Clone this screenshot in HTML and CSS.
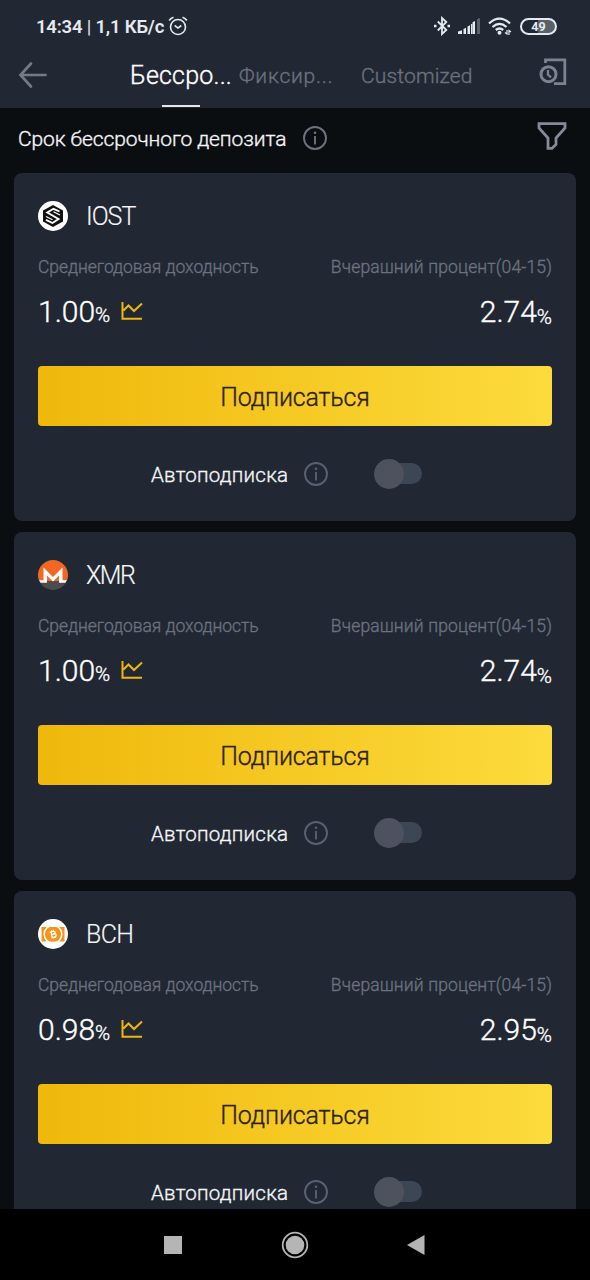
FILE: index.html
```html
<!DOCTYPE html>
<html lang="ru">
<head>
<meta charset="utf-8">
<title>Бессрочный депозит</title>
<link rel="stylesheet" href="styles.css">
</head>
<body>
<svg class="defs" aria-hidden="true">
  <symbol id="info" viewBox="0 0 26 26"><circle cx="13" cy="13" r="11" fill="none" stroke="currentColor" stroke-width="1.9"/><path d="M13 11v8.500" stroke="currentColor" stroke-width="1.900"/><circle cx="13" cy="7.800" r="1.300" fill="currentColor"/></symbol>
  <symbol id="chart" viewBox="0 0 22 20"><path d="M1.500 1v16.800H21M2.500 9.500l5-5 5.500 5.500L21 2.500" fill="none" stroke="currentColor" stroke-width="2"/></symbol>
</svg>
<div class="screen">
  <header class="header">
    <div class="status">
      <span class="clock">14:34 <i>|</i> 1,1 КБ/с</span>
      <svg class="alarm" viewBox="0 0 20 20" width="20" height="20" fill="none" stroke="currentColor" stroke-width="1.600"><circle cx="10" cy="11" r="7.500"/><path d="M6.700 9.500l3.300 2.600 3.300-2.600M1.200 4.500Q2.500 2.200 5.500 1.200M18.800 4.500Q17.500 2.200 14.500 1.200"/></svg>
      <div class="signals">
        <svg viewBox="0 0 16 20" width="16" height="20" fill="none" stroke="currentColor" stroke-width="1.800"><path d="M3.800 5.500l8.500 8.500-4.300 4V2l4.300 4-8.500 8.500"/><path d="M0 10h2.500M13.500 10H16" stroke-width="2.500"/></svg>
        <svg viewBox="0 0 22 16" width="22" height="16" fill="currentColor"><path d="M0 16v-2.500l4-1.200V16zM5.500 16v-5L8 9.800V16zM9.500 16V8.500L12 7.300V16zM13 16V6h1.200V16zM14.500 16V4.200L17 3V16z"/><path d="M19 16V1.200L22 0v16z" opacity=".3"/></svg>
        <svg viewBox="0 0 24 19" width="24" height="19"><g fill="none" stroke="currentColor" stroke-width="2.300"><path d="M1 6.500Q11.500-3.200 22 6.500M4.500 10Q11.500 3.800 18.500 10M7.800 13Q11.500 10 15.200 13"/></g><circle cx="11.500" cy="15.800" r="2" fill="currentColor"/><path d="M19 13v4l-2-1.500M21 18v-4.500l2 1.500" fill="none" stroke="currentColor" stroke-width="1.200"/></svg>
        <span class="battery">49</span>
      </div>
    </div>
    <nav class="tabs">
      <svg class="back" viewBox="0 0 30 28" width="30" height="28" fill="none" stroke="currentColor" stroke-width="2.700" stroke-linecap="round"><path d="M13 2.500L2.500 14 13 25.500M3 14h24.500"/></svg>
      <span class="tab tab-active"><span class="t-title">Бессро...</span></span>
      <span class="tab t-fixed">Фиксир...</span>
      <span class="tab t-custom">Customized</span>
      <svg class="history" viewBox="0 0 28 28" width="28" height="28" fill="none" stroke="currentColor"><path d="M6.500 5V1.800h19.300V25.700H15" stroke-width="2.800"/><circle cx="9.500" cy="16.200" r="7.500" stroke-width="3"/><path d="M9 12v4.800l3 2.500" stroke-width="2.300"/></svg>
    </nav>
  </header>
  <main class="content">
    <div class="section">
      <h1>Срок бессрочного депозита</h1>
      <svg class="info section-info"><use href="#info"/></svg>
      <svg class="filter" viewBox="0 0 30 30" width="30" height="30" fill="none" stroke="currentColor" stroke-width="2.800"><path d="M2 2.600H28V7L19 17v6.500L15 27.300H11V17L2 7z"/></svg>
    </div>
    <article class="card">
      <div class="coin">
        <svg viewBox="0 0 30 30"><circle cx="15" cy="15" r="15" fill="#fff"/><path d="M15 4l10 5.500v11L15 26 5 20.500v-11z" fill="#111"/><path d="M21.500 10.500L15.500 7.800 9.300 11.500 20.500 18 14.500 22 8 18.800" fill="none" stroke="#fff" stroke-width="1.900"/><path d="M8 15.500l6.500 3.300M22 14l-6.500-3.300" fill="none" stroke="#fff" stroke-width="1.100"/></svg>
        <h2 class="n-iost">IOST</h2>
      </div>
      <div class="labels"><span class="l-rate">Среднегодовая доходность</span><span class="l-yday">Вчерашний процент(04-15)</span></div>
      <div class="values"><span class="value">1.00<small>%</small></span><svg class="chart"><use href="#chart"/></svg><span class="value value-right">2.74<small>%</small></span></div>
      <button class="subscribe">Подписаться</button>
      <div class="auto"><span>Автоподписка</span><svg class="info"><use href="#info"/></svg><i class="switch"></i></div>
    </article>
    <article class="card">
      <div class="coin">
        <svg viewBox="0 0 30 30"><circle cx="15" cy="15" r="15" fill="#4c4c4c"/><path d="M1.200 21a15 15 0 1 1 27.600 0z" fill="#f26822"/><path d="M1.200 20.300h4.300V7.500L15 17l9.500-9.500v12.800h4.300l-1.300 2.500H21V15.500l-6 6-6-6v7.300H2.500z" fill="#fff"/></svg>
        <h2 class="n-xmr">XMR</h2>
      </div>
      <div class="labels"><span class="l-rate">Среднегодовая доходность</span><span class="l-yday">Вчерашний процент(04-15)</span></div>
      <div class="values"><span class="value">1.00<small>%</small></span><svg class="chart"><use href="#chart"/></svg><span class="value value-right">2.74<small>%</small></span></div>
      <button class="subscribe">Подписаться</button>
      <div class="auto"><span>Автоподписка</span><svg class="info"><use href="#info"/></svg><i class="switch"></i></div>
    </article>
    <article class="card">
      <div class="coin">
        <svg viewBox="0 0 30 30"><circle cx="15" cy="15" r="15" fill="#fff"/><path d="M3.500 8H26.500V22.500H3.500z" fill="#f7931a"/><circle cx="15" cy="15.300" r="8.800" fill="#f7931a" stroke="#fff" stroke-width="1.500"/><path d="M7.500 8h15v-4h-15zM7.500 22.500h15v4h-15z" fill="#fff"/><circle cx="15" cy="15.300" r="7.300" fill="#f7931a"/><g transform="rotate(-14 15 15)" fill="none" stroke="#fff" stroke-width="1.300"><path d="M12.200 12.600h3.600q1.600 0 1.600 1.300t-1.600 1.300H13.500h2.700q1.700 0 1.700 1.500t-1.700 1.500H12.200M13.500 12.600v5.600M14.300 11.200v1.400M16.200 11.200v1.400M14.300 18.200v1.400M16.200 18.200v1.400"/></g></svg>
        <h2 class="n-bch">BCH</h2>
      </div>
      <div class="labels"><span class="l-rate">Среднегодовая доходность</span><span class="l-yday">Вчерашний процент(04-15)</span></div>
      <div class="values"><span class="value">0.98<small>%</small></span><svg class="chart"><use href="#chart"/></svg><span class="value value-right">2.95<small>%</small></span></div>
      <button class="subscribe">Подписаться</button>
      <div class="auto"><span>Автоподписка</span><svg class="info"><use href="#info"/></svg><i class="switch"></i></div>
    </article>
  </main>
  <footer class="navbar">
    <svg viewBox="0 0 18 18" width="18" height="18"><path d="M0 0h18v18H0z" fill="#b5b5b5"/></svg>
    <svg viewBox="0 0 28 28" width="28" height="28"><circle cx="14" cy="14" r="12.300" fill="none" stroke="#b5b5b5" stroke-width="1.800"/><circle cx="14" cy="14" r="9.300" fill="#b5b5b5"/></svg>
    <svg viewBox="0 0 18 20" width="18" height="20"><path d="M17.500 0v20L0 10z" fill="#b5b5b5"/></svg>
  </footer>
</div>
</body>
</html>
```
FILE: styles.css
```css
* { box-sizing: border-box; }
body { margin: 0; background: #0b0e11; font-family: Roboto, "Liberation Sans", sans-serif; font-weight: 300; color: #f5f6f8; }
h1, h2 { margin: 0; font-weight: 300; }
svg { flex: none; display: block; }
.defs { width: 0; height: 0; position: absolute; }
.screen { width: 590px; height: 1280px; display: flex; flex-direction: column; overflow: hidden; white-space: nowrap; }

.header { height: 108px; flex: none; background: #212833; }
.status { height: 52px; padding: 0 33px 0 36px; display: flex; align-items: center; color: #e6eaf0; }
.clock { font-size: 18.500px; font-weight: 600; width: 132px; letter-spacing: -0.2px; padding-top: 1px; }
.clock i { font-style: normal; font-weight: 400; }
.signals { margin-left: auto; display: flex; align-items: center; gap: 8px; }
.battery { width: 37px; height: 17px; border: 2px solid #e6eaf0; border-radius: 9px; font-size: 12.5px; font-weight: 700; line-height: 13px; text-align: center; background: linear-gradient(90deg, transparent 50%, #5a6069 50%); }

.tabs { height: 56px; padding: 0 24px 0 18px; display: flex; align-items: flex-start; color: #6b727e; -webkit-text-stroke: 0.35px; }
.back { margin-top: 9px; color: #747b87; }
.tab { height: 56px; line-height: 48px; font-size: 21px; }
.tab-active { width: 103px; margin-left: 82px; color: #fff; font-size: 25px; display: flex; flex-direction: column; justify-content: space-between; }
.tab-active::after { content: ""; width: 38px; height: 2px; margin: 0 0 1px 32px; background: #e4e6e9; }
.t-title { letter-spacing: 0.2px; }
.t-fixed { width: 122px; margin-left: 6px; letter-spacing: 0.75px; }
.t-custom { letter-spacing: 0.15px; }
.history { margin: 6px -1px 0 auto; color: #7b8290; }

.content { flex: 1; min-height: 0; overflow: hidden; display: flex; flex-direction: column; gap: 11.400px; padding: 0 14px; -webkit-text-stroke: 0.35px; }
.section { height: 54px; flex: none; display: flex; align-items: center; padding: 7px 9px 0 4px; }
.section h1 { font-size: 21px; width: 284px; letter-spacing: -0.1px; }
.info { width: 26px; height: 26px; color: #566174; }
.section .info { margin-top: -1px; }
.section-info { color: #6d7381; }
.filter { margin-left: auto; color: #858b99; margin-top: -5px; }

.card { height: 347.500px; flex: none; border-radius: 8px; background: #212833; padding: 24.500px 24px 0; }
.coin { height: 36px; display: flex; align-items: center; gap: 18px; }
.coin svg { width: 30px; height: 30px; }
.coin h2 { font-size: 25px; line-height: 36px; padding-top: 2px; -webkit-text-stroke: 0.15px; }
.n-iost { letter-spacing: -1px; }
.n-xmr { letter-spacing: -1.500px; }
.n-bch { letter-spacing: -0.600px; }
.labels { height: 26px; margin-top: 20px; display: flex; justify-content: space-between; line-height: 26px; font-size: 17.500px; color: #6b727e; }
.l-rate { letter-spacing: -0.05px; }
.l-yday { letter-spacing: 0.15px; }
.values { height: 44px; margin-top: 10px; display: flex; align-items: center; line-height: 40px; font-size: 30px; color: #fff; }
.value { padding-top: 4px; }
.value small { font-size: 20.500px; }
.value-right { margin-left: auto; }
.value-right small { position: relative; top: 2px; }
.chart { width: 22px; height: 20px; margin: -2px 0 0 11px; color: #edb711; }
.subscribe { display: block; width: 100%; height: 60px; margin-top: 32px; padding: 3px 0 0; border: 0; border-radius: 4px; background: linear-gradient(90deg, #efb80b, #fcdb3c); color: #2c2218; font: 300 25px/57px Roboto, "Liberation Sans", sans-serif; letter-spacing: -0.150px; -webkit-text-stroke: 0.35px; }
.auto { height: 48px; margin-top: 24px; padding-left: 113px; display: flex; align-items: center; font-size: 20.500px; }
.auto span { width: 152px; padding-top: 2px; letter-spacing: 0.250px; }
.switch { width: 48px; height: 30px; margin-left: 45px; display: flex; align-items: center; }
.switch::before { content: ""; width: 30px; height: 30px; border-radius: 50%; background: #4d525e; z-index: 1; }
.switch::after { content: ""; width: 38px; height: 21px; margin-left: -20px; border-radius: 11px; background: #3d4654; }

.navbar { height: 71px; flex: none; background: #000; display: flex; align-items: center; justify-content: space-between; padding: 0 165px 0 164px; }
```
